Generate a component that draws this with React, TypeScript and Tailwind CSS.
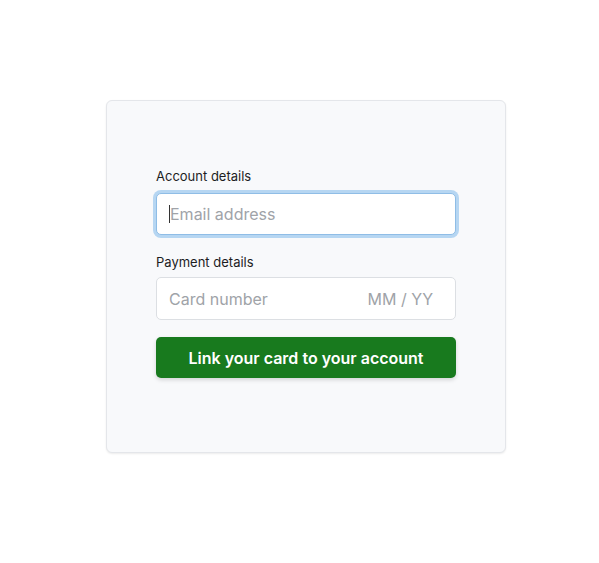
export default function App() {
  return (
    <div className="flex bg-white pl-[106px] pt-[100px] h-[563px] font-['Inter','Liberation_Sans',sans-serif]">
      <div className="w-[400px] h-[353px] bg-[#f8f9fb] rounded-md border border-[#e4e6ea] shadow-[0_1px_2px_rgba(0,0,0,0.08)] px-[49px] pt-[67px]">
        <label className="block text-[13px] leading-[16px] text-[#1d1d1f] mb-[9px]">Account details</label>
        <div className="h-[42px] bg-white rounded-[5px] border border-[#8fbde6] shadow-[0_0_0_3px_#b6d6f2] flex items-center px-[12px]">
          <span className="w-px h-[18px] bg-[#333]" />
          <span className="text-[16px] text-[#a0a3a8]">Email address</span>
        </div>
        <label className="block text-[13px] leading-[16px] text-[#1d1d1f] mt-[19px] mb-[7px]">Payment details</label>
        <div className="h-[43px] bg-white rounded-[5px] border border-[#dcdfe3] flex items-center justify-between pl-[12px] pr-[22px]">
          <span className="text-[16px] text-[#a0a3a8]">Card number</span>
          <span className="text-[16px] text-[#a0a3a8]">MM / YY</span>
        </div>
        <button className="mt-[17px] w-full h-[41px] rounded-[5px] bg-[#187a1e] text-white text-[16px] font-semibold shadow-[0_2px_4px_rgba(0,0,0,0.15)]">
          Link your card to your account
        </button>
      </div>
    </div>
  );
}
